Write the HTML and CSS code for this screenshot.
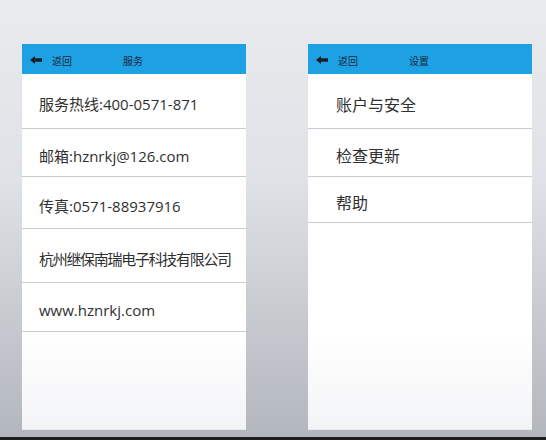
FILE: index.html
```html
<!DOCTYPE html>
<html lang="zh-CN">
<head>
<meta charset="utf-8">
<title>服务 / 设置</title>
<link rel="stylesheet" href="styles.css">
</head>
<body>
<div class="stage">
  <div class="screens">
    <section class="panel">
      <header class="bar">
        <svg class="back-icon" width="12" height="8" viewBox="0 0 12 8"><polygon points="0,4 5,0 5,2.3 12,2.3 12,5.7 5,5.7 5,8" fill="#1a1f26"/></svg>
        <span class="back-text">返回</span>
        <span class="bar-title">服务</span>
      </header>
      <ul class="list list-service">
        <li class="row h55">服务热线:400-0571-871</li>
        <li class="row h48">邮箱:hznrkj@126.com</li>
        <li class="row h52">传真:0571-88937916</li>
        <li class="row h54 row-tight">杭州继保南瑞电子科技有限公司</li>
        <li class="row h49">www.hznrkj.com</li>
      </ul>
    </section>
    <section class="panel">
      <header class="bar">
        <svg class="back-icon" width="12" height="8" viewBox="0 0 12 8"><polygon points="0,4 5,0 5,2.3 12,2.3 12,5.7 5,5.7 5,8" fill="#1a1f26"/></svg>
        <span class="back-text">返回</span>
        <span class="bar-title">设置</span>
      </header>
      <ul class="list list-settings">
        <li class="row h55">账户与安全</li>
        <li class="row h48">检查更新</li>
        <li class="row h46">帮助</li>
      </ul>
    </section>
  </div>
  <div class="taskbar"></div>
</div>
</body>
</html>
```
FILE: styles.css
```css
* { box-sizing: border-box; }
html, body { margin: 0; padding: 0; }
body {
  width: 546px;
  height: 440px;
  overflow: hidden;
  font-family: "Open Sans", "Noto Sans CJK SC", sans-serif;
  background: linear-gradient(to bottom, #e9ebee 0%, #dfe2e6 40%, #b2b6bd 100%);
}
.stage {
  display: flex;
  flex-direction: column;
  height: 440px;
}
.screens {
  flex: 1;
  display: flex;
  gap: 62px;
  padding: 44px 0 7px 22px;
}
.panel {
  width: 224px;
  display: flex;
  flex-direction: column;
  background: linear-gradient(to bottom, #ffffff 0%, #ffffff 75%, #f3f4f6 100%);
  border-bottom: 1px solid #e8e9eb;
}
.bar {
  height: 30px;
  flex: none;
  background: #1ea0e4;
  display: flex;
  align-items: center;
  padding-left: 8px;
  padding-top: 2px;
  font-family: "Noto Sans CJK SC", sans-serif;
  font-size: 10px;
  color: #1d2a38;
}
.back-icon { flex: none; }
.back-text { margin-left: 10px; }
.bar-title { margin-left: 51px; }
.list {
  list-style: none;
  margin: 0;
  padding: 0;
}
.row {
  display: flex;
  align-items: center;
  padding-top: 5px;
  border-bottom: 1px solid #cbcccf;
  color: #303030;
  white-space: nowrap;
}
.list-service .row { padding-left: 17px; font-size: 15px; }
.list-settings .row { padding-left: 28px; font-size: 16px; }
.list-service .row-tight { font-size: 15px; letter-spacing: -1.3px; }
.h46 { height: 46px; }
.h48 { height: 48px; }
.h49 { height: 49px; }
.h52 { height: 52px; }
.h54 { height: 54px; }
.h55 { height: 55px; }
.taskbar {
  height: 3px;
  flex: none;
  background: #1c1e22;
}
```
